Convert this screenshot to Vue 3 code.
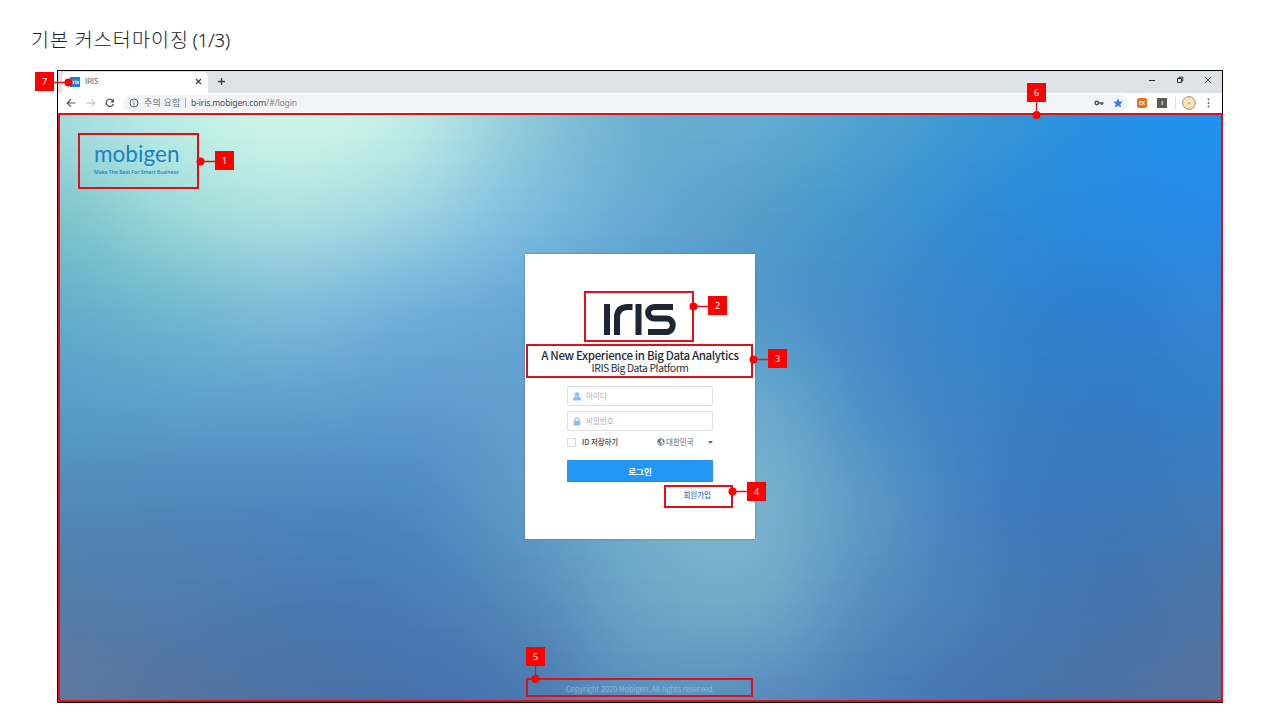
<script setup>
const rows = [
  ['a5dde0', 'bdeee6', 'cff5e9', 'c0ece7', '90cbd9', '6cb0d0', '64add3', '4fa1d0', '3996d6', '2691e4', '2092ee'],
  ['80c6cd', '9dd9d9', 'ade0e1', '9fd5e1', '7fbede', '68aad3', '559ecb', '4395cd', '318cd5', '288ae0', '278be8'],
  ['64afcb', '72b9cf', '7fbcd9', '72b1da', '68a7d5', '5a9dcf', '5299ca', '448bc9', '3584cd', '2f80d0', '3485d5'],
  ['579dc8', '5d9fcb', '5f9fcd', '5e9bce', '629fce', '68a7cd', '6baacc', '4c8fc7', '3b82c4', '357bc3', '3580c8'],
  ['5189b8', '5087bb', '4f87be', '4d89c2', '5f9ac6', '72aecb', '78b1cb', '5a97c5', '427ebf', '3b77b8', '417bb8'],
  ['537ca7', '507cae', '4a7ab2', '497cb6', '5489ba', '6ba4c5', '6fa9c7', '568cbf', '477db5', '4373ae', '4c74a5'],
  ['5f789f', '56749f', '4d71a3', '4771ab', '4a79b2', '5990be', '598cbd', '4b7fb7', '4674ae', '4c71a3', '56719d']
].map(row => row.map(hex => [0, 2, 4].map(k => parseInt(hex.slice(k, k + 2), 16))))

const cubic = (a, b, c, d, t) =>
  b + 0.5 * t * (c - a + t * (2 * a - 5 * b + 4 * c - d + t * (3 * (b - c) + d - a)))

// Catmull-Rom resampling of a list of numeric vectors
function resample(list, parts) {
  const at = i => list[Math.max(0, Math.min(list.length - 1, i))]
  const out = []
  for (let i = 0; i < list.length - 1; i++) {
    for (let p = 0; p < parts; p++) {
      out.push(at(i).map((_, k) => cubic(at(i - 1)[k], at(i)[k], at(i + 1)[k], at(i + 2)[k], p / parts)))
    }
  }
  out.push(at(list.length - 1))
  return out
}

const fine = resample(rows.map(row => resample(row, 5).flat()), 4)
const layers = fine.map((flat, i) => {
  const step = 100 / (fine.length - 1)
  const stops = []
  for (let k = 0; k < flat.length; k += 3) stops.push(`rgb(${flat.slice(k, k + 3).map(v => v.toFixed(1)).join(' ')})`)
  const style = { background: `linear-gradient(to right, ${stops.join(', ')})` }
  if (i > 0) style.maskImage = `linear-gradient(to bottom, transparent ${(i - 1) * step}%, #000 ${i * step}%)`
  return style
})
</script>

<template>
  <main class="slide">
    <h1 class="title">기본 커스터마이징 <span>(1/3)</span></h1>
    <section class="browser">
      <header class="tabs">
        <div class="tab">
          <span class="favicon">iris</span>
          <span class="tab-name">IRIS</span>
          <svg width="7" height="7" viewBox="0 0 7 7"><path d="M1 1l5 5M6 1L1 6" stroke="#3c4043" stroke-width="1.1" /></svg>
        </div>
        <svg class="plus" width="9" height="9" viewBox="0 0 9 9"><path d="M4.500 1v7M1 4.500h7" stroke="#3c4043" stroke-width="1.300" /></svg>
        <div class="window-buttons">
          <svg width="8" height="8" viewBox="0 0 8 8"><path d="M1 4.500h6" stroke="#333" /></svg>
          <svg width="8" height="8" viewBox="0 0 8 8"><path d="M1.500 2.500h4v4h-4zM3 2.500V1.200h3.800V5H5.500" fill="none" stroke="#333" /></svg>
          <svg width="8" height="8" viewBox="0 0 8 8"><path d="M1 1l6 6M7 1L1 7" stroke="#444" stroke-width=".9" /></svg>
        </div>
      </header>
      <nav class="toolbar">
        <svg width="10" height="10" viewBox="0 0 10 10"><path d="M9.500 5H1.200M5 1.200L1.200 5 5 8.800" fill="none" stroke="#55585c" stroke-width="1.200" /></svg>
        <svg width="10" height="10" viewBox="0 0 10 10"><path d="M.5 5h8.300M5 1.200L8.800 5 5 8.800" fill="none" stroke="#b2b4b8" /></svg>
        <svg width="10" height="10" viewBox="0 0 10 10"><path d="M7.800 2.500A3.700 3.700 0 1 0 8.400 6" fill="none" stroke="#4d5054" stroke-width="1.300" /><path d="M9 .7v3.700H5.300z" fill="#4d5054" /></svg>
        <div class="address">
          <svg width="10" height="10" viewBox="0 0 10 10"><circle cx="5" cy="5" r="4" fill="none" stroke="#606468" /><path d="M5 4.400v3M5 2.400v1.100" stroke="#606468" /></svg>
          <span class="warning">주의 요함</span>
          <i></i>
          <span class="url">b-iris.mobigen.com<em>/#/login</em></span>
          <svg class="key" width="10" height="8" viewBox="0 0 10 8"><circle cx="2.800" cy="4" r="1.700" fill="none" stroke="#505357" stroke-width="1.500" /><path d="M4.500 4h5M7.700 4v2" stroke="#505357" stroke-width="1.700" /></svg>
          <svg width="10" height="10" viewBox="0 0 10 10"><path d="M5 .3l1.400 3.100 3.400.4-2.500 2.300.7 3.400L5 7.800 2 9.500l.7-3.400L.2 3.800l3.400-.4z" fill="#4179ea" /></svg>
        </div>
        <span class="ext orange">EX</span>
        <span class="ext gray">I</span>
        <i class="divider"></i>
        <svg width="14" height="14" viewBox="0 0 14 14"><circle cx="7" cy="7" r="6.400" fill="#fbe0b8" stroke="#8d7961" stroke-width=".8" /><circle cx="7" cy="7" r=".9" fill="#d99958" /></svg>
        <svg class="more" width="3" height="10" viewBox="0 0 3 10"><circle v-for="y in [1.500, 5, 8.500]" :key="y" cx="1.500" :cy="y" r=".9" fill="#55585c" /></svg>
      </nav>
      <div class="page">
        <div v-for="(layer, i) in layers" :key="i" class="mesh" :style="layer"></div>
        <div class="brand">
          <strong>mobigen</strong>
          <small>Make The Best For Smart Business</small>
        </div>
        <form class="card" @submit.prevent>
          <svg class="logo" width="74" height="33" viewBox="0 0 74 33">
            <g fill="none" stroke="#1c2634" stroke-width="6">
              <path d="M4 1v31M14 32V15Q14 4 25 4h4.500M35.500 1v31" />
              <path d="M70 4H51.500c-8.500 0-8.500 11.500 0 11.500H63c9 0 9 13.500 0 13.500H45" />
            </g>
          </svg>
          <h2>A New Experience in Big Data Analytics</h2>
          <h3>IRIS Big Data Platform</h3>
          <label class="field">
            <svg width="8" height="9" viewBox="0 0 8 9"><circle cx="4" cy="2.500" r="2.300" fill="#86c0f4" /><path d="M0 8.500V7q0-2.300 2.300-2.500Q4 6 5.700 4.500 8 4.700 8 7v1.500z" fill="#86c0f4" /></svg>
            <span>아이디</span>
          </label>
          <label class="field second">
            <svg width="8" height="9" viewBox="0 0 8 9"><path d="M2 4V2.800a2 2 0 0 1 4 0V4" fill="none" stroke="#86c0f4" stroke-width="1.200" /><rect x=".7" y="3.800" width="6.600" height="4.700" rx=".6" fill="#86c0f4" /></svg>
            <span>비밀번호</span>
          </label>
          <div class="options">
            <i class="check"></i><span class="save">ID 저장하기</span>
            <svg class="globe" width="8" height="8" viewBox="0 0 8 8"><circle cx="4" cy="4" r="3.400" fill="#fff" stroke="#627184" stroke-width=".8" /><path d="M.8 2.400L3 .7l1.600.7-1 1.400-.3 1.200 1.600.7-.8 2.600L3 6.500 2.500 5 .8 4zM5.700 1.300l1.500 1.500-.4 1.900-1.300-1z" fill="#627184" /></svg>
            <span class="country">대한민국</span>
            <svg class="caret" width="5" height="3" viewBox="0 0 5 3"><path d="M0 0h5L2.500 3z" fill="#5c6978" /></svg>
          </div>
          <button>로그인</button>
          <a>회원가입</a>
        </form>
        <footer>Copyright 2020 Mobigen. All rights reserved.</footer>
      </div>
    </section>

    <div class="outline o1"></div><div class="outline o2"></div><div class="outline o3"></div>
    <div class="outline o4"></div><div class="outline o5"></div><div class="outline o6"></div>
    <svg class="connectors" width="1280" height="720" viewBox="0 0 1280 720">
      <path d="M201 161.500h14M694 306.500h14M754 359.500h14M733 491.500h14M535.500 666v13M1036.500 102v13M54 82.500h14" stroke="#e8101a" stroke-width="1.300" />
      <g fill="#f00"><circle cx="200.500" cy="161.500" r="4" /><circle cx="693.500" cy="306.500" r="4" /><circle cx="753.500" cy="359.500" r="4" /><circle cx="732.500" cy="491.500" r="4" /><circle cx="535.500" cy="679" r="4" /><circle cx="1036.500" cy="115" r="4" /><circle cx="68.500" cy="82.500" r="4" /></g>
    </svg>
    <b v-for="n in 7" :key="n" class="badge" :class="'b' + n">{{ n }}</b>
  </main>
</template>

<style>
body { margin: 0; background: #fff; }
</style>

<style scoped>
* { box-sizing: border-box; }
.slide { position: relative; width: 1280px; height: 720px; overflow: hidden; padding: 22px 57px 0; background: #fff; font-family: "Noto Sans CJK KR", sans-serif; }
svg { display: block; flex: none; }
em { font-style: normal; }
.title { height: 34px; margin: 0 0 14px -26px; font-size: 19.500px; letter-spacing: 1.150px; line-height: 33px; font-weight: 300; color: #1a1a1a; white-space: nowrap; }
.title span { font-family: "Open Sans", sans-serif; font-weight: 300; font-size: 18.500px; letter-spacing: 0; margin-left: -2px; -webkit-text-stroke: .25px #1a1a1a; }
.browser { width: 1166px; height: 633px; display: flex; flex-direction: column; border: 1px solid #000; background: #fff; }
.tabs { height: 22px; display: flex; align-items: center; background: #dee1e6; }
.tab { width: 146px; height: 21px; align-self: flex-end; margin-left: 4px; padding: 0 6px 0 8px; display: flex; align-items: center; background: #fff; border-radius: 5px 5px 0 0; }
.favicon { width: 10px; height: 10px; position: relative; top: -1px; background: #1e7fd8; color: #fff; font: bold 5px/10px "Open Sans", sans-serif; text-align: center; }
.tab-name { margin-left: 5px; flex: 1; position: relative; top: -2px; font-size: 8px; line-height: 12px; letter-spacing: -.35px; color: #66696d; }
.tab svg { position: relative; top: -1px; }
.plus { margin-left: 9px; position: relative; top: -1px; }
.window-buttons { margin-left: auto; margin-right: 10px; display: flex; gap: 20px; position: relative; top: -2px; }
.toolbar { height: 20px; display: flex; align-items: center; padding: 0 12px 0 8px; flex: none; }
.toolbar > svg { margin-right: 10px; }
.toolbar > svg:nth-child(3) { margin-right: 8px; margin-left: -1px; }
.address { width: 1005px; height: 17px; display: flex; align-items: center; padding: 0 5px 0 6px; border-radius: 9px; background: #f1f3f4; color: #6d7175; font-size: 9px; line-height: 16px; white-space: nowrap; }
.warning { margin-left: 5px; width: 38px; font-size: 9px; letter-spacing: .3px; }
.address i { margin: 0 5px 0 3px; width: 1px; height: 10px; background: #aaa; }
.url { color: #484b4f; font-family: "Noto Sans", sans-serif; font-size: 8.500px; letter-spacing: -.13px; }
.url em { color: #7c8185; }
.key { margin-left: auto; margin-right: 9px; }
.ext { width: 10px; height: 10px; border-radius: 2px; color: #fff; font: bold 5px/10px "Open Sans", sans-serif; text-align: center; }
.orange { background: #e96d22; margin-left: 9px; }
.gray { background: #5b5b5b; margin-left: 10px; border-radius: 0; }
.divider { width: 1px; height: 12px; margin: 0 6px 0 8px; background: #ddd; }
.toolbar > .more { margin: 0 0 0 auto; }
.page { position: relative; flex: 1; display: flex; flex-direction: column; align-items: center; overflow: hidden; }
.mesh { position: absolute; inset: 0; }
.brand { position: relative; align-self: flex-start; margin: 27px 0 0 36px; width: 86px; height: 38px; color: #1c81c3; display: flex; flex-direction: column; white-space: nowrap; }
.brand strong { font: 400 22.500px/28px Lato, sans-serif; letter-spacing: .05px; }
.brand small { font: 600 5.100px/8px "Open Sans", sans-serif; }
.card { position: relative; width: 230px; height: 285px; margin-top: 76px; padding: 49px 42px 0; background: #fff; box-shadow: 0 0 2px #3467; display: flex; flex-direction: column; align-items: stretch; }
.logo { margin-left: 36px; }
h2, h3 { margin: 0 -42px; text-align: center; color: #252b34; white-space: nowrap; }
h2 { margin-top: 12px; font-size: 11.500px; line-height: 14px; letter-spacing: -.35px; font-weight: 500; }
h3 { font-size: 10.300px; line-height: 11px; letter-spacing: -.38px; font-weight: 400; }
.field { height: 20px; margin-top: 13px; flex: none; border: 1px solid #dde1e5; border-radius: 2px; display: flex; align-items: center; padding: 1px 5px 0; gap: 5px; font-size: 7.500px; line-height: 14px; color: #a8b0ba; }
.field span { position: relative; top: -1px; }
.second { margin-top: 5px; }
.options { height: 10px; margin-top: 6px; display: flex; align-items: center; font-size: 7.500px; line-height: 10px; color: #536274; white-space: nowrap; }
.check { width: 9px; height: 9px; border: 1px solid #d7dce1; }
.save { margin-left: 6px; color: #444; font-weight: 500; letter-spacing: -.1px; }
.globe { margin-left: auto; }
.country { margin-left: 1px; width: 42px; }
button { height: 22px; margin-top: 13px; flex: none; padding: 0; border: 0; border-radius: 1px; background: #2196f3; color: #fff; font: 700 8.500px/21px "Noto Sans CJK KR", sans-serif; box-shadow: inset 0 -1px #1d88df; }
a { align-self: flex-end; margin: 7px 2px 0; font-size: 7.500px; line-height: 12px; font-weight: 500; color: #3978cc; }
footer { position: absolute; bottom: 7px; left: 0; width: 100%; text-align: center; font-size: 7.500px; line-height: 12px; letter-spacing: -.1px; color: #94b8d4; }
.outline { position: absolute; border: 2px solid #dc1218; }
.o1 { left: 78px; top: 133px; width: 121px; height: 56px; }
.o2 { left: 584px; top: 291px; width: 110px; height: 51px; }
.o3 { left: 526px; top: 344px; width: 227px; height: 34px; }
.o4 { left: 664px; top: 485px; width: 69px; height: 23px; }
.o5 { left: 526px; top: 678px; width: 227px; height: 19px; }
.o6 { left: 58px; top: 113px; width: 1165px; height: 589px; }
.connectors { position: absolute; inset: 0; }
.badge { position: absolute; width: 19px; height: 19px; background: #f00; color: #fff; font: 400 9px/19px "Noto Sans", sans-serif; text-align: center; }
.b1 { left: 215px; top: 151px; } .b2 { left: 708px; top: 296px; } .b3 { left: 768px; top: 349px; }
.b4 { left: 747px; top: 482px; } .b5 { left: 526px; top: 647px; } .b6 { left: 1027px; top: 83px; } .b7 { left: 35px; top: 72px; }
</style>
